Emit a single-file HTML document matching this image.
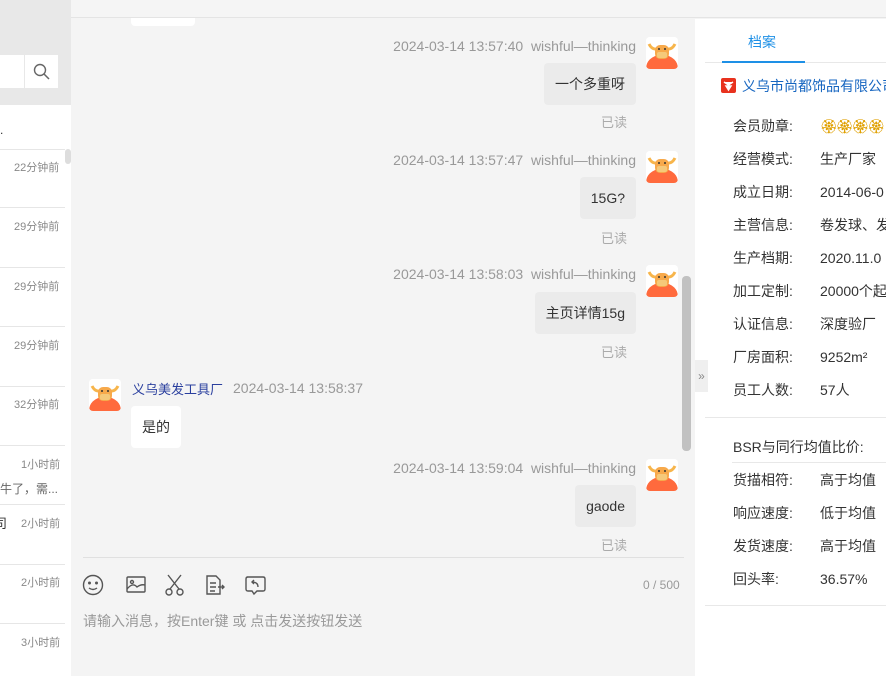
<!DOCTYPE html>
<html><head><meta charset="utf-8"><style>
*{margin:0;padding:0;box-sizing:border-box}
body{width:886px;height:676px;overflow:hidden;font-family:"Liberation Sans","Noto Sans CJK SC",sans-serif;background:#f4f4f4;position:relative;font-size:14px;color:#333}
.a{position:absolute}
.t{color:#999;font-size:14px;white-space:nowrap;line-height:18px}
.bub{position:absolute;right:250px;background:#ebebeb;border-radius:4px;height:42px;line-height:42px;padding:0 11px;font-size:14px;color:#333;white-space:nowrap}
.rd{position:absolute;color:#aaa;font-size:13px}
.av{position:absolute;width:32px;height:32px;border-radius:4px;background:#fff;overflow:hidden}
.lt{position:absolute;font-size:11px;color:#888;right:12px}
.ln{position:absolute;left:0;width:65px;height:1px;background:#e6e6e6}
.rl{position:absolute;left:733px;font-size:14px;color:#333;white-space:nowrap;line-height:20px}
.rv{position:absolute;left:820px;font-size:14px;color:#333;white-space:nowrap;line-height:20px}
</style></head><body>
<div class="a" style="left:0;top:0;width:71px;height:676px;background:#fff"></div>
<div class="a" style="left:0;top:0;width:71px;height:105px;background:#e8e8e8"></div>
<div class="a" style="left:0;top:55px;width:24px;height:33px;background:#fff"></div>
<div class="a" style="left:25px;top:55px;width:33px;height:33px;background:#fff"></div>
<svg class="a" style="left:33px;top:63px" width="18" height="18" viewBox="0 0 18 18"><circle cx="7" cy="7" r="5.5" fill="none" stroke="#666" stroke-width="1.4"/><path d="M11 11L16 16" stroke="#666" stroke-width="1.5"/></svg>
<div class="a" style="left:0;top:123px;font-size:12px">.</div>
<div class="a" style="left:65px;top:149px;width:6px;height:15px;background:#ddd;border-radius:3px"></div>
<div class="ln" style="top:149px"></div><div class="ln" style="top:207px"></div><div class="ln" style="top:267px"></div><div class="ln" style="top:326px"></div><div class="ln" style="top:386px"></div><div class="ln" style="top:445px"></div><div class="ln" style="top:504px"></div><div class="ln" style="top:564px"></div><div class="ln" style="top:623px"></div>
<div class="lt" style="top:159px;left:14px">22分钟前</div>
<div class="lt" style="top:218px;left:14px">29分钟前</div>
<div class="lt" style="top:278px;left:14px">29分钟前</div>
<div class="lt" style="top:337px;left:14px">29分钟前</div>
<div class="lt" style="top:396px;left:14px">32分钟前</div>
<div class="lt" style="top:456px;left:21px">1小时前</div>
<div class="a" style="top:480px;left:0;font-size:12px;color:#666">牛了，需...</div>
<div class="a" style="top:513px;left:-6px;font-size:13px;color:#333">司</div>
<div class="lt" style="top:515px;left:21px">2小时前</div>
<div class="lt" style="top:574px;left:21px">2小时前</div>
<div class="lt" style="top:634px;left:21px">3小时前</div>
<div class="a" style="left:71px;top:0;width:815px;height:18px;background:#f5f5f5;border-bottom:1px solid #e4e4e4"></div>
<div class="a" style="left:131px;top:18px;width:64px;height:8px;background:#fff;border-radius:0 0 4px 4px"></div>
<div class="a t" style="right:250px;top:37px">2024-03-14 13:57:40&nbsp;&nbsp;wishful—thinking</div>
<div class="bub" style="top:63px">一个多重呀</div>
<div class="rd" style="left:601px;top:112px">已读</div>
<div class="a t" style="right:250px;top:151px">2024-03-14 13:57:47&nbsp;&nbsp;wishful—thinking</div>
<div class="bub" style="top:177px">15G?</div>
<div class="rd" style="left:601px;top:228px">已读</div>
<div class="a t" style="right:250px;top:265px">2024-03-14 13:58:03&nbsp;&nbsp;wishful—thinking</div>
<div class="bub" style="top:292px">主页详情15g</div>
<div class="rd" style="left:601px;top:342px">已读</div>
<div class="a" style="left:132px;top:379px;font-size:13px;color:#2a3f9e">义乌美发工具厂</div>
<div class="a t" style="left:233px;top:379px">2024-03-14 13:58:37</div>
<div class="bub" style="left:131px;right:auto;top:406px;background:#fff">是的</div>
<div class="a t" style="right:250px;top:459px">2024-03-14 13:59:04&nbsp;&nbsp;wishful—thinking</div>
<div class="bub" style="top:485px">gaode</div>
<div class="rd" style="left:601px;top:535px">已读</div>
<svg width="0" height="0" style="position:absolute"><defs><g id="bull"><path d="M0 32 Q0 20 16 17 Q32 20 32 32Z" fill="#ff6a3d"/><path d="M3 7 Q6 13 11 12 M29 7 Q26 13 21 12" stroke="#f7b54b" stroke-width="3" fill="none"/><rect x="9" y="8" width="14" height="14" rx="5" fill="#f7a94b"/><rect x="11" y="15" width="10" height="6" rx="2" fill="#f5c97a"/><circle cx="13" cy="12" r="1" fill="#333"/><circle cx="19" cy="12" r="1" fill="#333"/></g></defs></svg>
<svg class="av" style="left:646px;top:37px" viewBox="0 0 32 32"><rect width="32" height="32" fill="#fff"/><use href="#bull"/></svg>
<svg class="av" style="left:646px;top:151px" viewBox="0 0 32 32"><rect width="32" height="32" fill="#fff"/><use href="#bull"/></svg>
<svg class="av" style="left:646px;top:265px" viewBox="0 0 32 32"><rect width="32" height="32" fill="#fff"/><use href="#bull"/></svg>
<svg class="av" style="left:89px;top:379px" viewBox="0 0 32 32"><rect width="32" height="32" fill="#fff"/><use href="#bull"/></svg>
<svg class="av" style="left:646px;top:459px" viewBox="0 0 32 32"><rect width="32" height="32" fill="#fff"/><use href="#bull"/></svg>
<div class="a" style="left:682px;top:276px;width:9px;height:175px;background:#c1c1c1;border-radius:4px"></div>
<div class="a" style="left:83px;top:557px;width:601px;height:1px;background:#e0e0e0"></div>
<svg class="a" style="left:82px;top:573px" width="200" height="24" viewBox="0 0 200 24" fill="none" stroke="#555" stroke-width="1.4">
<circle cx="11" cy="12" r="9.5"/><circle cx="7.5" cy="10" r="0.8" fill="#555"/><circle cx="14.5" cy="10" r="0.8" fill="#555"/><path d="M7 15 Q11 18 15 15"/>
<rect x="45" y="4" width="18" height="15" rx="1"/><circle cx="50" cy="9" r="1.5"/><path d="M45 16 Q51 9 55 14 Q59 11 63 12"/>
<path d="M86 2 L97 16 M99 2 L88 16"/><circle cx="87" cy="19" r="3"/><circle cx="98" cy="19" r="3"/>
<path d="M125 3 H134 L138 7 V21 H125 Z M128 10 H134 M128 14 H134 M128 18 H133 M136 14 H142 M140 12 L142 14 L140 16"/>
<path d="M165 4 H181 Q183 4 183 6 V16 Q183 18 181 18 H175 L172 21 L170 18 H166 Q164 18 164 16 V6 Q164 4 166 4Z M176 14 Q176 9 170 9 M172 7 L170 9 L172 11"/>
</svg>
<div class="a" style="left:643px;top:578px;font-size:12px;color:#999">0 / 500</div>
<div class="a" style="left:83px;top:611px;font-size:14px;color:#999">请输入消息，按Enter键 或 点击发送按钮发送</div>
<div class="a" style="left:695px;top:19px;width:191px;height:657px;background:#fff"></div>
<div class="a" style="left:695px;top:360px;width:13px;height:32px;background:#efefef;font-size:12px;color:#888;line-height:32px;text-align:center">»</div>
<div class="a" style="left:705px;top:62px;width:181px;height:1px;background:#e8e8e8"></div>
<div class="a" style="left:748px;top:32px;font-size:14px;color:#1e90e6">档案</div>
<div class="a" style="left:722px;top:61px;width:83px;height:2px;background:#1e90e6"></div>
<div class="a" style="left:721px;top:78px;width:15px;height:15px;background:#e8321e;border-radius:2px"></div>
<svg class="a" style="left:721px;top:78px" width="15" height="15"><path d="M3 4 L7.5 7 L12 4 M5 8 L7.5 12 L10 8Z" stroke="#fff" stroke-width="1.5" fill="#fff"/></svg>
<div class="a" style="left:742px;top:76px;font-size:14px;color:#1565c0;white-space:nowrap">义乌市尚都饰品有限公司</div>
<div class="rl" style="top:116px">会员勋章:</div><div class="rv" style="top:116px;color:#e0a000;letter-spacing:-2px">🏵🏵🏵🏵</div>
<div class="rl" style="top:149px">经营模式:</div><div class="rv" style="top:149px">生产厂家</div>
<div class="rl" style="top:182px">成立日期:</div><div class="rv" style="top:182px">2014-06-0</div>
<div class="rl" style="top:215px">主营信息:</div><div class="rv" style="top:215px">卷发球、发</div>
<div class="rl" style="top:248px">生产档期:</div><div class="rv" style="top:248px">2020.11.0</div>
<div class="rl" style="top:281px">加工定制:</div><div class="rv" style="top:281px">20000个起</div>
<div class="rl" style="top:314px">认证信息:</div><div class="rv" style="top:314px">深度验厂</div>
<div class="rl" style="top:347px">厂房面积:</div><div class="rv" style="top:347px">9252m²</div>
<div class="rl" style="top:380px">员工人数:</div><div class="rv" style="top:380px">57人</div>
<div class="a" style="left:705px;top:417px;width:181px;height:1px;background:#e8e8e8"></div>
<div class="rl" style="top:437px">BSR与同行均值比价:</div>
<div class="a" style="left:732px;top:462px;width:154px;height:1px;background:#e8e8e8"></div>
<div class="rl" style="top:470px">货描相符:</div><div class="rv" style="top:470px">高于均值</div>
<div class="rl" style="top:503px">响应速度:</div><div class="rv" style="top:503px">低于均值</div>
<div class="rl" style="top:536px">发货速度:</div><div class="rv" style="top:536px">高于均值</div>
<div class="rl" style="top:569px">回头率:</div><div class="rv" style="top:569px">36.57%</div>
<div class="a" style="left:705px;top:605px;width:181px;height:1px;background:#e8e8e8"></div>
</body></html>
